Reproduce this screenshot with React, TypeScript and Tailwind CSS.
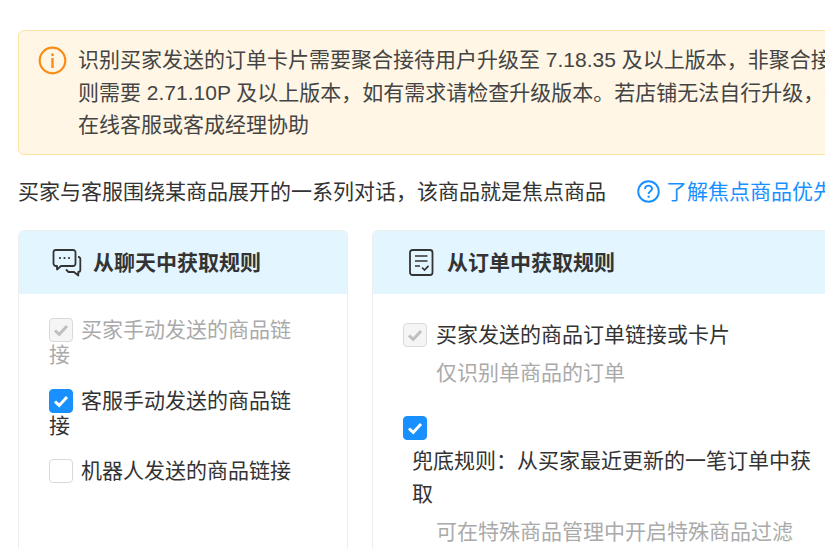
const FONT = "font-['Liberation_Sans','Noto_Sans_CJK_SC',sans-serif]";
const COMMA = "\uff0c";
const COLON = "\uff1a";

function Check({ state }: { state: "disabled" | "on" | "off" }) {
  const box =
    state === "on"
      ? "bg-[#1890ff] border-[#1890ff]"
      : state === "disabled"
        ? "bg-[#f5f5f5] border-[#d9d9d9]"
        : "bg-white border-[#d9d9d9]";
  return (
    <span className={`inline-flex w-6 h-6 rounded-[4px] border items-center justify-center align-top shrink-0 ${box}`}>
      {state !== "off" && (
        <svg width="16" height="14" viewBox="0 0 16 14" fill="none">
          <path
            d="M2 7.5 L6.2 11.4 L14 3"
            stroke={state === "on" ? "#fff" : "#bfbfbf"}
            strokeWidth="3"
          />
        </svg>
      )}
    </span>
  );
}

function LeftItem({ state, text, muted }: { state: "disabled" | "on" | "off"; text: string; muted?: boolean }) {
  return (
    <div className={`leading-[25px] w-[250px] text-[21px] ${muted ? "text-[#aaaaaa]" : "text-[#333333]"}`}>
      <span className="inline-flex h-[25px] items-end align-top">
        <Check state={state} />
      </span>
      <span className="ml-2">{text}</span>
    </div>
  );
}

export default function App() {
  return (
    <div className={`w-[825px] h-[549px] overflow-hidden bg-white ${FONT}`}>
      <div className="w-[1100px] pl-[18px] pt-[30px]">
        <div className="w-[1000px] h-[125px] rounded-[6px] border border-[#ffe1a3] bg-[#fff6e5] flex pl-[19px] pt-[14px]">
          <svg width="29" height="29" viewBox="0 0 29 29" fill="none" className="shrink-0 mt-[1px]">
            <circle cx="14.5" cy="14.5" r="12.8" stroke="#fa8c16" strokeWidth="2.2" />
            <rect x="13.3" y="7.4" width="2.4" height="2.6" fill="#fa8c16" />
            <rect x="13.3" y="12" width="2.4" height="10" fill="#fa8c16" />
          </svg>
          <p className="ml-[11px] -mt-[1px] text-[21px] leading-[32.5px] text-[#444444] whitespace-nowrap">
            {`识别买家发送的订单卡片需要聚合接待用户升级至 7.18.35 及以上版本${COMMA}非聚合接待用户`}
            <br />
            {`则需要 2.71.10P 及以上版本${COMMA}如有需求请检查升级版本。若店铺无法自行升级${COMMA}请联系`}
            <br />
            在线客服或客成经理协助
          </p>
        </div>

        <div className="flex items-center mt-[20px] h-[33px] whitespace-nowrap text-[21px]">
          <span className="text-[#333333]">{`买家与客服围绕某商品展开的一系列对话${COMMA}该商品就是焦点商品`}</span>
          <svg width="23" height="23" viewBox="0 0 23 23" fill="none" className="ml-[31px] shrink-0">
            <circle cx="11.5" cy="11.5" r="10.3" stroke="#1890ff" strokeWidth="1.9" />
            <path
              d="M8 9 C8 6.8 9.6 5.6 11.5 5.6 C13.5 5.6 15 6.9 15 8.7 C15 11.2 11.6 11.2 11.6 14"
              stroke="#1890ff"
              strokeWidth="1.9"
            />
            <rect x="10.6" y="15.6" width="2" height="2.2" fill="#1890ff" />
          </svg>
          <span className="ml-[6px] text-[#1890ff]">了解焦点商品优先级规则</span>
        </div>

        <div className="flex gap-[24px] mt-[22px] items-start">
          <div className="w-[330px] h-[400px] shrink-0 rounded-t-[6px] border border-[#eeeeee] border-b-0">
            <div className="h-[63px] bg-[#e3f5ff] rounded-t-[5px] flex items-center pl-[33px]">
              <svg width="30" height="30" viewBox="0 0 30 30" fill="none" className="shrink-0">
                <path
                  d="M4 2 H21 A2.5 2.5 0 0 1 23.5 4.5 V15.5 A2.5 2.5 0 0 1 21 18 H9 L5 21.5 V18 H4 A2.5 2.5 0 0 1 1.5 15.5 V4.5 A2.5 2.5 0 0 1 4 2 Z"
                  stroke="#333333"
                  strokeWidth="1.8"
                  strokeLinejoin="round"
                />
                <path
                  d="M26 9 H26.5 A1.8 1.8 0 0 1 28.3 10.8 V22 A2 2 0 0 1 26.3 24 V27.5 L22 24 H16.5 L14 21.5"
                  stroke="#333333"
                  strokeWidth="1.8"
                  strokeLinejoin="round"
                />
                <circle cx="8" cy="10" r="1.1" fill="#333333" />
                <circle cx="12.5" cy="10" r="1.1" fill="#333333" />
                <circle cx="17" cy="10" r="1.1" fill="#333333" />
              </svg>
              <span className="ml-[11px] text-[21px] font-bold text-[#333333]">从聊天中获取规则</span>
            </div>
            <div className="pl-[30px] pt-[23px] flex flex-col gap-[20.5px]">
              <LeftItem state="disabled" text="买家手动发送的商品链接" muted />
              <LeftItem state="on" text="客服手动发送的商品链接" />
              <LeftItem state="off" text="机器人发送的商品链接" />
            </div>
          </div>

          <div className="w-[600px] h-[400px] shrink-0 rounded-t-[6px] border border-[#eeeeee] border-b-0">
            <div className="h-[63px] bg-[#e3f5ff] rounded-t-[5px] flex items-center pl-[36px]">
              <svg width="25" height="27" viewBox="0 0 25 27" fill="none" className="shrink-0">
                <rect x="1" y="1" width="22.5" height="25" rx="2.5" stroke="#333333" strokeWidth="1.8" />
                <path d="M6 7 H18.5 M6 12 H18.5 M6 17 H11" stroke="#333333" strokeWidth="1.7" />
                <path d="M13 18.5 L15.5 21 L19.5 16.8" stroke="#333333" strokeWidth="1.7" />
              </svg>
              <span className="ml-[13px] text-[21px] font-bold text-[#333333]">从订单中获取规则</span>
            </div>
            <div className="pl-[30px] pt-[29px] text-[21px]">
              <div className="flex items-center h-[24px]">
                <Check state="disabled" />
                <span className="ml-[9px] text-[#333333] whitespace-nowrap">买家发送的商品订单链接或卡片</span>
              </div>
              <div className="pl-[33px] mt-[12px] leading-[27px] text-[#aaaaaa]">仅识别单商品的订单</div>
              <div className="mt-[30px] h-[24px]">
                <Check state="on" />
              </div>
              <div className="pl-[9px] mt-[4px] w-[420px] leading-[33px] text-[#333333]">
                {`兜底规则${COLON}从买家最近更新的一笔订单中获取`}
              </div>
              <div className="pl-[33px] mt-[8px] leading-[27px] text-[#aaaaaa] whitespace-nowrap">
                可在特殊商品管理中开启特殊商品过滤
              </div>
            </div>
          </div>
        </div>
      </div>
    </div>
  );
}
